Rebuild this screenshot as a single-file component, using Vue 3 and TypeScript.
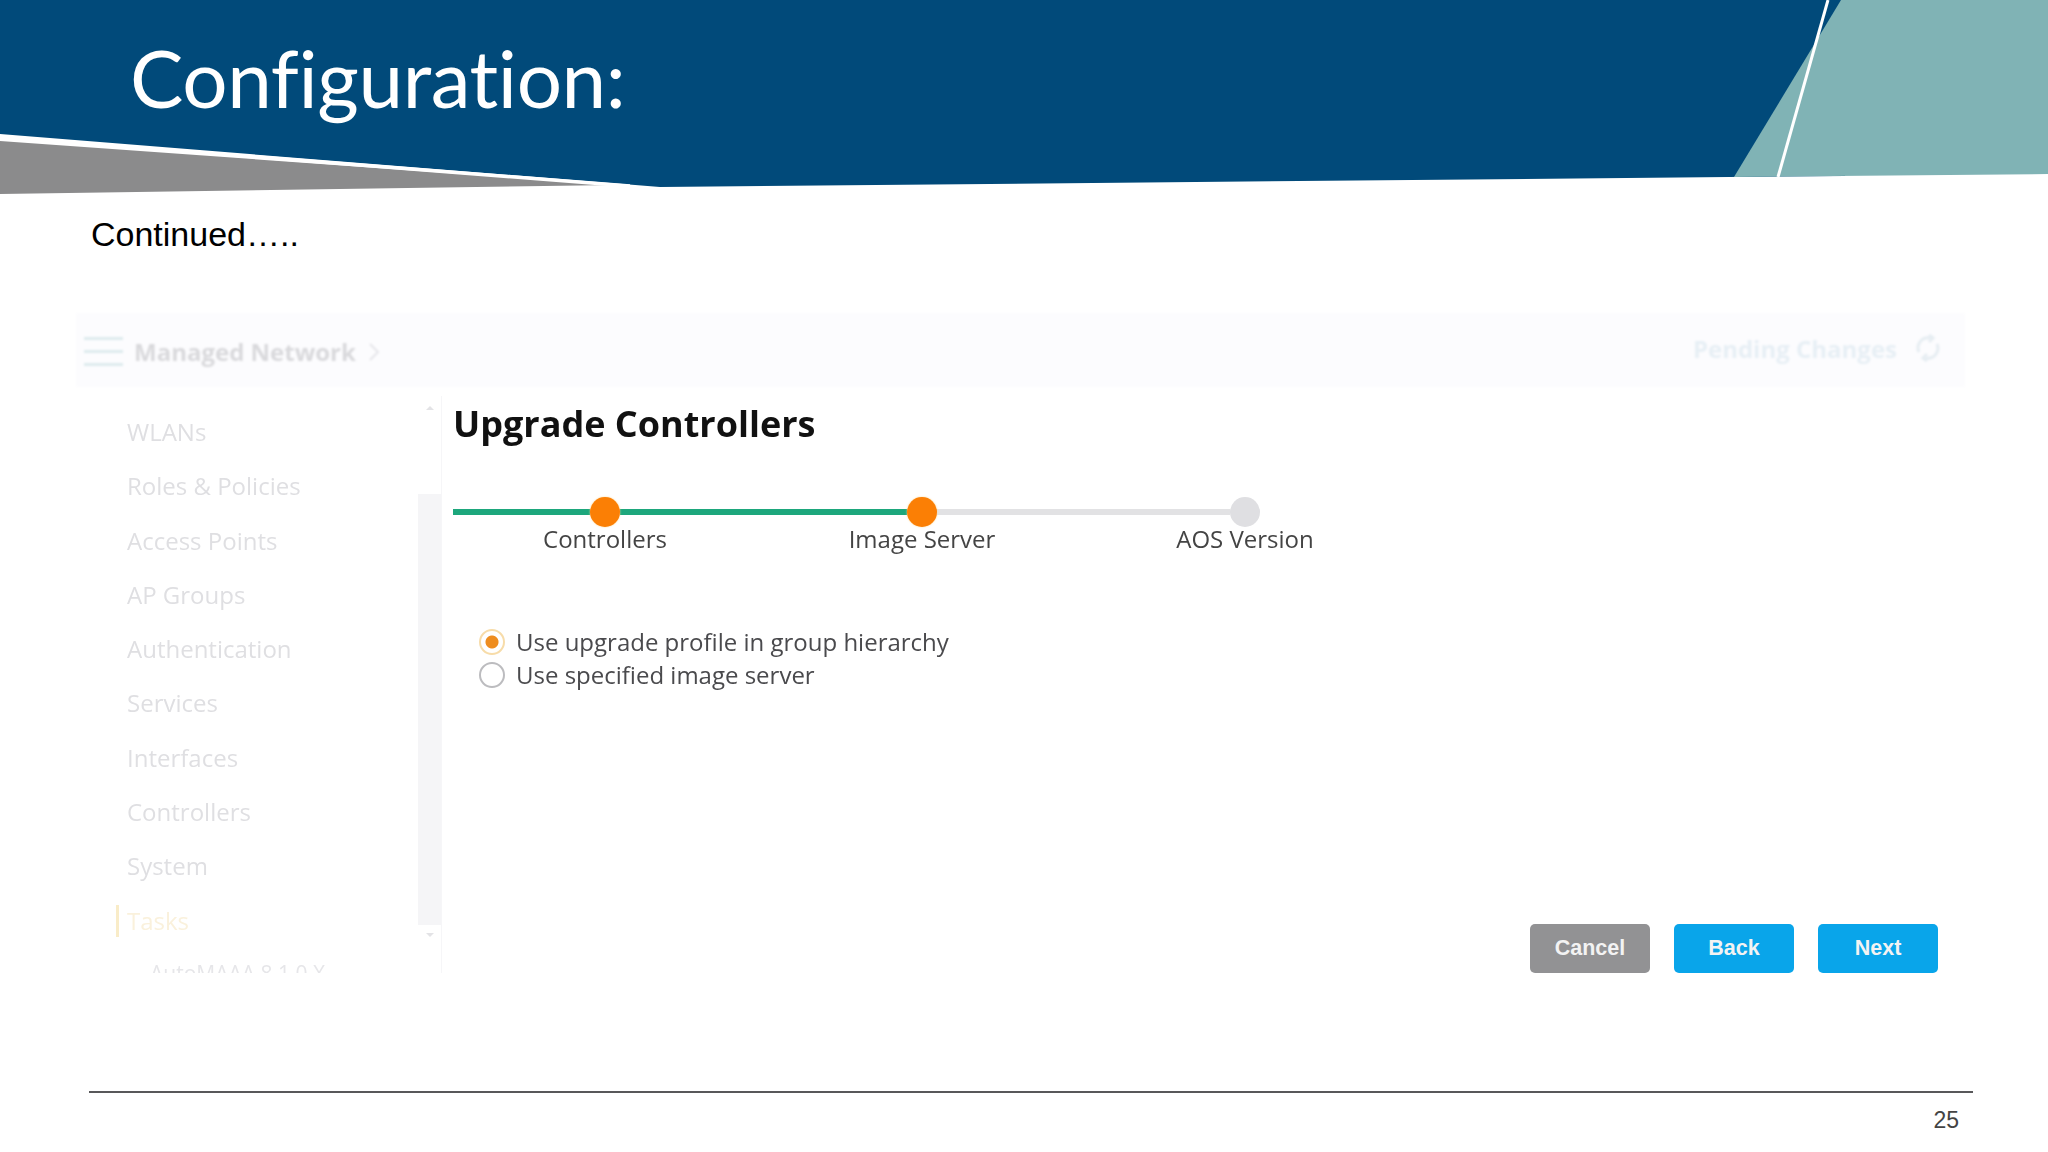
<script setup lang="ts">
const navItems: string[] = [
  'WLANs', 'Roles & Policies', 'Access Points', 'AP Groups', 'Authentication',
  'Services', 'Interfaces', 'Controllers', 'System',
]
const steps = [
  { label: 'Controllers', state: 'done' },
  { label: 'Image Server', state: 'done' },
  { label: 'AOS Version', state: 'todo' },
]
const options = [
  { label: 'Use upgrade profile in group hierarchy', on: true },
  { label: 'Use specified image server', on: false },
]
</script>

<template>
  <div class="slide">
    <header class="hero">
      <svg class="hero-art" viewBox="0 0 2048 200" width="2048" height="200" aria-hidden="true">
        <polygon points="0,0 1845,0 1845,176 660,187 0,134" fill="#014a7a" />
        <polygon points="0,141 615,185 0,194" fill="#8b8b8c" />
        <polygon points="1841,0 2048,0 2048,174 1734,177" fill="#80b3b5" />
        <line x1="1828" y1="0" x2="1778" y2="177" stroke="#fff" stroke-width="3" />
        <line x1="0" y1="137" x2="630" y2="186" stroke="#fff" stroke-width="3.5" />
      </svg>
      <h1 class="title">Configuration:</h1>
    </header>

    <p class="continued">Continued…..</p>

    <section class="panel">
      <div class="topbar">
        <div class="topbar-left">
          <span class="burger"><i></i><i></i><i></i></span>
          <span class="crumb">Managed Network</span>
          <svg class="chev" width="12" height="20" viewBox="0 0 12 20"><path d="M2 2l8 8-8 8" fill="none" stroke="#e6e6ea" stroke-width="2" /></svg>
        </div>
        <div class="topbar-right">
          <span class="pending">Pending Changes</span>
          <svg class="refresh" width="28" height="28" viewBox="0 0 28 28" fill="none" stroke="#e6edf2" stroke-width="3">
            <path d="M5 18a10 10 0 0 1 11-14" />
            <path d="M23 10a10 10 0 0 1-11 14" />
            <path d="M15 1l4 3-4 4" />
            <path d="M13 20l-4 4 4 3" />
          </svg>
        </div>
      </div>

      <div class="content">
        <nav class="sidebar">
          <ul class="nav">
            <li v-for="item in navItems" :key="item" class="nav-item">{{ item }}</li>
            <li class="nav-item nav-active"><span>Tasks</span></li>
            <li class="nav-sub">AutoMAAA 8.1.0.X</li>
          </ul>
          <div class="scrollbar">
            <span class="arrow up"></span>
            <span class="thumb"></span>
            <span class="arrow down"></span>
          </div>
        </nav>

        <main class="main">
          <h2 class="heading">Upgrade Controllers</h2>

          <div class="stepper">
            <template v-for="(s, i) in steps" :key="s.label">
              <span class="seg" :class="[s.state, 'seg' + i]"></span>
              <span class="dot" :class="s.state"><span class="step-label">{{ s.label }}</span></span>
            </template>
          </div>

          <div class="options">
            <label v-for="o in options" :key="o.label" class="option">
              <span class="radio" :class="{ on: o.on }"></span>
              <span>{{ o.label }}</span>
            </label>
          </div>

          <div class="actions">
            <button class="btn cancel">Cancel</button>
            <button class="btn primary">Back</button>
            <button class="btn primary">Next</button>
          </div>
        </main>
      </div>
    </section>

    <footer class="foot">
      <span class="page">25</span>
    </footer>
  </div>
</template>

<style scoped>
.slide {
  position: relative;
  width: 2048px;
  height: 1152px;
  overflow: hidden;
  background: #fff;
  display: flex;
  flex-direction: column;
}
.hero {
  position: relative;
  height: 194px;
  padding-left: 130px;
  box-sizing: border-box;
}
.hero-art {
  position: absolute;
  left: 0;
  top: 0;
}
.title {
  position: relative;
  margin: 0;
  padding-top: 27px;
  font: 400 80px/100px Lato, "Open Sans", sans-serif;
  letter-spacing: -0.4px;
  color: #fff;
}
.continued {
  margin: 19px 0 0 91px;
  font: 400 34px/42px "Liberation Sans", Arial, sans-serif;
  color: #000;
}
.panel {
  margin: 58px 83px 0 76px;
  font-family: "Open Sans", sans-serif;
}
.topbar {
  height: 74px;
  background: #fcfcfe;
  display: flex;
  align-items: center;
  justify-content: space-between;
  padding: 0 23px 0 8px;
  filter: blur(0.9px);
}
.topbar-left,
.topbar-right {
  display: flex;
  align-items: center;
}
.topbar-left {
  margin-top: 3px;
}
.burger {
  display: flex;
  flex-direction: column;
  gap: 10px;
  width: 39px;
  margin-right: 11px;
}
.burger i {
  display: block;
  height: 3px;
  background: #deebee;
}
.crumb {
  font-weight: 700;
  font-size: 24px;
  line-height: 34px;
  color: #d9d9dc;
}
.chev {
  margin-left: 12px;
}
.topbar-right {
  margin-top: -4px;
}
.pending {
  font-weight: 700;
  font-size: 24px;
  color: #e7eff5;
  margin-right: 17px;
}
.content {
  display: flex;
  align-items: flex-start;
}
.sidebar {
  display: flex;
  flex: none;
  width: 365px;
  height: 577px;
  overflow: hidden;
  border-right: 1px solid #f6f6f8;
  margin-top: 9px;
}
.nav {
  list-style: none;
  margin: 0;
  padding: 9px 0 0;
  width: 342px;
  filter: blur(0.7px);
}
.nav-item {
  height: 54.3px;
  line-height: 54.3px;
  padding-left: 51px;
  font-size: 24px;
  color: #dfdfe2;
}
.nav-active {
  position: relative;
  color: #faf1dc;
}
.nav-active::before {
  content: "";
  position: absolute;
  left: 40px;
  top: 11px;
  width: 3px;
  height: 32px;
  background: #f9ecc8;
}
.nav-sub {
  padding-left: 74px;
  font-size: 21px;
  line-height: 28px;
  margin-top: 11px;
  color: #e6e6e9;
}
.scrollbar {
  width: 23px;
  height: 100%;
  display: flex;
  flex-direction: column;
  align-items: center;
}
.arrow {
  flex: none;
  width: 0;
  height: 0;
  border-left: 4px solid transparent;
  border-right: 4px solid transparent;
}
.arrow.up {
  margin: 10px 0 84px;
  border-bottom: 4px solid #e3e3e6;
}
.arrow.down {
  margin-top: 8px;
  border-top: 4px solid #e3e3e6;
}
.thumb {
  flex: none;
  width: 23px;
  height: 431px;
  background: #f5f5f7;
}
.main {
  flex: 1;
  height: 577px;
  margin-top: 9px;
  padding: 0 27px 0 11px;
  display: flex;
  flex-direction: column;
}
.heading {
  margin: 4px 0 0;
  font-weight: 700;
  font-size: 36px;
  line-height: 48px;
  color: #111;
  filter: blur(0.4px);
}
.stepper {
  display: flex;
  align-items: center;
  width: 807px;
  height: 30px;
  margin-top: 49px;
}
.seg {
  height: 6px;
  flex: 1 1 0;
  background: #e2e2e4;
}
.seg.done {
  background: #1da77c;
}
.seg0 {
  flex: 0 0 137px;
}
.seg1 {
  flex: 0 0 287px;
}
.dot {
  position: relative;
  flex: none;
  width: 30px;
  height: 30px;
  border-radius: 50%;
  background: #dfdfe2;
}
.dot.done {
  background: #fb7f05;
  box-shadow: 0 0 2px #fdd793;
}
.step-label {
  position: absolute;
  top: 26px;
  left: 50%;
  transform: translateX(-50%);
  white-space: nowrap;
  font-size: 24px;
  line-height: 32px;
  color: #444;
  filter: blur(0.35px);
}
.options {
  margin-top: 98px;
  padding-left: 26px;
  display: flex;
  flex-direction: column;
  font-size: 24px;
  color: #4a4a4d;
}
.option {
  display: flex;
  align-items: center;
  gap: 11px;
  height: 33px;
  filter: blur(0.35px);
}
.radio {
  flex: none;
  width: 26px;
  height: 26px;
  box-sizing: border-box;
  border: 2px solid #bcbcbf;
  border-radius: 50%;
  background: #fff;
}
.radio.on {
  border-color: #f7dca9;
  background: radial-gradient(circle, #ee8d1f 0 6px, #fff 7px);
}
.actions {
  margin-top: auto;
  display: flex;
  justify-content: flex-end;
  gap: 24px;
}
.btn {
  width: 120px;
  height: 49px;
  padding: 0;
  border: none;
  border-radius: 5px;
  font: 700 21.5px "Liberation Sans", Arial, sans-serif;
  color: #f3f3f3;
}
.btn.cancel {
  background: #929294;
}
.btn.primary {
  background: #09a5ea;
}
.foot {
  margin: 118px 75px 0 89px;
  border-top: 2px solid #58585a;
  display: flex;
  justify-content: flex-end;
  padding: 14px 14px 0 0;
}
.page {
  font: 400 23px/26px "Liberation Sans", Arial, sans-serif;
  color: #444;
}
</style>
